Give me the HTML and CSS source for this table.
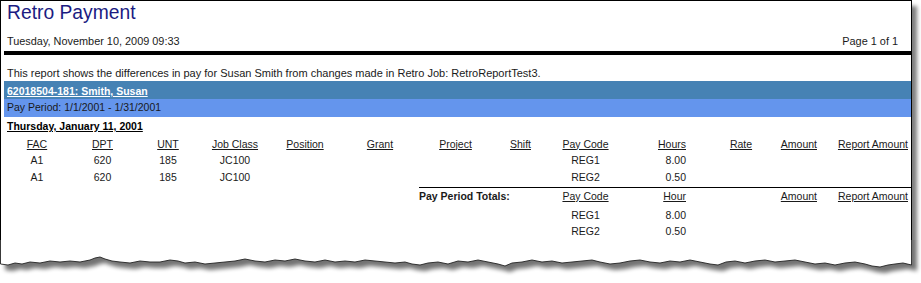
FILE: index.html
```html
<!DOCTYPE html>
<html>
<head>
<meta charset="utf-8">
<title>Retro Payment</title>
<link rel="stylesheet" href="styles.css">
</head>
<body>
<div class="sheet">
  <h1 class="title">Retro Payment</h1>
  <div class="dateline"><span>Tuesday, November 10, 2009 09:33</span><span>Page 1 of 1</span></div>
  <div class="rule"></div>
  <div class="desc">This report shows the differences in pay for Susan Smith from changes made in Retro Job: RetroReportTest3.</div>
  <div class="emp">62018504-181: Smith, Susan</div>
  <div class="period">Pay Period: 1/1/2001 - 1/31/2001</div>
  <div class="day">Thursday, January 11, 2001</div>

  <div class="table">
    <div class="grid head">
      <span class="c u">FAC</span><span class="c u">DPT</span><span class="c u">UNT</span><span class="c u">Job Class</span><span class="c u">Position</span><span class="c u">Grant</span><span class="c u">Project</span><span class="c u">Shift</span><span class="c u">Pay Code</span><span class="hrs u">Hours</span><span class="c u">Rate</span><span class="r u">Amount</span><span class="r u">Report Amount</span>
    </div>
    <div class="grid">
      <span class="c">A1</span><span class="c">620</span><span class="c">185</span><span class="c">JC100</span><span></span><span></span><span></span><span></span><span class="c">REG1</span><span class="hrs">8.00</span><span></span><span></span><span></span>
    </div>
    <div class="grid">
      <span class="c">A1</span><span class="c">620</span><span class="c">185</span><span class="c">JC100</span><span></span><span></span><span></span><span></span><span class="c">REG2</span><span class="hrs">0.50</span><span></span><span></span><span></span>
    </div>
  </div>

  <div class="totals">
    <div class="tgrid thead">
      <span class="label">Pay Period Totals:</span><span class="c u">Pay Code</span><span class="hrs u">Hour</span><span></span><span class="r u">Amount</span><span class="r u">Report Amount</span>
    </div>
    <div class="tgrid">
      <span></span><span class="c">REG1</span><span class="hrs">8.00</span><span></span><span></span><span></span>
    </div>
    <div class="tgrid">
      <span></span><span class="c">REG2</span><span class="hrs">0.50</span><span></span><span></span><span></span>
    </div>
  </div>

  <svg class="torn" width="921" height="43" viewBox="0 0 921 43" aria-hidden="true">
    <defs>
      <filter id="blur" x="-5%" y="-100%" width="110%" height="300%">
        <feGaussianBlur stdDeviation="2.3"/>
      </filter>
    </defs>
    <rect x="0" y="0" width="921" height="43" fill="#fff"/>
    <polygon transform="translate(5,6)" filter="url(#blur)" fill="#000" opacity="0.55"
      points="0,-20 0,24 8,25 15,23 22,24 30,22 40,23 50,21 60,22 70,21 80,22 90,20 95,18 100,17 105,19 112,21 120,22 130,23 140,21 150,22 160,22 170,20 178,21 185,23 195,22 205,24 215,23 225,22 235,21 245,19 255,21 265,22 275,20 285,21 295,19 305,21 315,22 325,20 335,22 345,21 355,22 365,20 375,21 385,22 395,23 405,22 412,24 420,25 428,23 438,22 448,24 458,21 468,22 478,20 488,22 498,24 505,26 512,23 522,22 532,20 542,22 552,21 562,23 572,22 582,21 592,20 600,22 610,24 620,23 630,21 640,20 650,22 660,23 670,21 680,22 690,20 700,22 710,24 718,25 726,22 735,21 745,23 755,21 765,20 775,22 785,21 795,20 805,22 815,24 825,23 835,25 845,23 855,22 865,24 872,26 880,27 888,25 895,24 903,23 912,25 912,-20"/>
    <polygon fill="#fff"
      points="0,-20 0,24 8,25 15,23 22,24 30,22 40,23 50,21 60,22 70,21 80,22 90,20 95,18 100,17 105,19 112,21 120,22 130,23 140,21 150,22 160,22 170,20 178,21 185,23 195,22 205,24 215,23 225,22 235,21 245,19 255,21 265,22 275,20 285,21 295,19 305,21 315,22 325,20 335,22 345,21 355,22 365,20 375,21 385,22 395,23 405,22 412,24 420,25 428,23 438,22 448,24 458,21 468,22 478,20 488,22 498,24 505,26 512,23 522,22 532,20 542,22 552,21 562,23 572,22 582,21 592,20 600,22 610,24 620,23 630,21 640,20 650,22 660,23 670,21 680,22 690,20 700,22 710,24 718,25 726,22 735,21 745,23 755,21 765,20 775,22 785,21 795,20 805,22 815,24 825,23 835,25 845,23 855,22 865,24 872,26 880,27 888,25 895,24 903,23 912,25 912,-20"/>
    <polyline fill="none" stroke="#222" stroke-width="0.9"
      points="0.5,0 0.5,24 8,25 15,23 22,24 30,22 40,23 50,21 60,22 70,21 80,22 90,20 95,18 100,17 105,19 112,21 120,22 130,23 140,21 150,22 160,22 170,20 178,21 185,23 195,22 205,24 215,23 225,22 235,21 245,19 255,21 265,22 275,20 285,21 295,19 305,21 315,22 325,20 335,22 345,21 355,22 365,20 375,21 385,22 395,23 405,22 412,24 420,25 428,23 438,22 448,24 458,21 468,22 478,20 488,22 498,24 505,26 512,23 522,22 532,20 542,22 552,21 562,23 572,22 582,21 592,20 600,22 610,24 620,23 630,21 640,20 650,22 660,23 670,21 680,22 690,20 700,22 710,24 718,25 726,22 735,21 745,23 755,21 765,20 775,22 785,21 795,20 805,22 815,24 825,23 835,25 845,23 855,22 865,24 872,26 880,27 888,25 895,24 903,23 911.5,25 911.5,0"/>
  </svg>
</div>
</body>
</html>
```

FILE: styles.css
```css
html, body {
  margin: 0;
  padding: 0;
  overflow: hidden;
  background: #fff;
}

body {
  font-family: "Liberation Sans", Arial, sans-serif;
  font-size: 10.5px;
  color: #1a1a1a;
}

.sheet {
  position: relative;
  width: 907px;
  height: 283px;
  padding-left: 3px;
  border: 1px solid #000;
  border-bottom: none;
  background: #fff;
  box-shadow: 5px 6px 4px rgba(0, 0, 0, 0.5);
}

.title {
  margin: 1px 0 0;
  padding-left: 3px;
  font-size: 19.3px;
  font-weight: normal;
  line-height: 22px;
  color: #1b1b82;
}

.dateline {
  display: flex;
  justify-content: space-between;
  margin-top: 10px;
  padding: 0 13px 0 3px;
  font-size: 10.9px;
  line-height: 14px;
}

.rule {
  height: 4px;
  margin-top: 3px;
  background: #000;
}

.desc {
  margin-top: 11px;
  padding-left: 3px;
  font-size: 11px;
  line-height: 14px;
}

.emp {
  margin-top: 1px;
  padding: 2px 3px 0;
  line-height: 16px;
  background: #4682b4;
  color: #fff;
  font-weight: bold;
  text-decoration: underline;
}

.period {
  padding: 0 3px 2px;
  line-height: 16px;
  background: #6495ed;
  color: #1a1a1a;
}

.day {
  margin-top: 2px;
  padding-left: 3px;
  line-height: 14px;
  font-weight: bold;
  text-decoration: underline;
  color: #000;
}

.table {
  margin-top: 2.5px;
}

.grid {
  display: grid;
  grid-template-columns: 66px 65px 66px 68px 72px 78px 73px 57px 73px 84px 70px 41px 91px;
  line-height: 16.5px;
  white-space: nowrap;
}

.totals {
  margin: 2px 0 0 415px;
  border-top: 1px solid #000;
}

.tgrid {
  display: grid;
  grid-template-columns: 130px 73px 84px 70px 41px 91px;
  line-height: 16.5px;
  white-space: nowrap;
}

.thead {
  padding-bottom: 2px;
}

.label {
  font-weight: bold;
}

.c { text-align: center; }
.r { text-align: right; }
.hrs { text-align: right; padding-right: 20px; }
.u { text-decoration: underline; }

.torn {
  position: absolute;
  left: -1px;
  top: 239px;
  display: block;
}
```
